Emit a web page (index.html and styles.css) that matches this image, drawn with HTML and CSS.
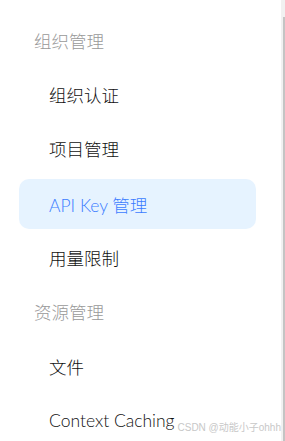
FILE: index.html
```html
<!DOCTYPE html>
<html lang="zh-CN">
<head>
    <meta charset="UTF-8">
    <meta name="viewport" content="width=device-width, initial-scale=1.0">
    <title>菜单</title>
    <link rel="stylesheet" href="styles.css">
</head>
<body>
    <div class="sidebar">
        <ul class="menu">
            <li class="group-title">组织管理</li>
            <li class="item">组织认证</li>
            <li class="item">项目管理</li>
            <li class="item active">API Key 管理</li>
            <li class="item">用量限制</li>
            <li class="group-title">资源管理</li>
            <li class="item">文件</li>
            <li class="item">Context Caching</li>
        </ul>
    </div>
    <div class="scrollbar"><div class="thumb"></div></div>
    <div class="watermark">CSDN @动能小子ohhh</div>
</body>
</html>
```

FILE: styles.css
```css
html, body {
    margin: 0;
    height: 100%;
    overflow: hidden;
}
body {
    font-family: Lato, "Noto Sans CJK SC", sans-serif;
    background-color: #fff;
    display: flex;
}
.sidebar {
    flex: 1;
    padding: 15px 0 0 19px;
}
.menu {
    list-style: none;
    margin: 0;
    padding: 0;
    width: 237px;
    display: flex;
    flex-direction: column;
    gap: 4.4px;
}
.menu li {
    height: 50px;
    display: flex;
    align-items: center;
    font-size: 17.5px;
    font-weight: 300;
    white-space: nowrap;
}
.group-title {
    padding-left: 15px;
    color: #999;
}
.item {
    padding-left: 30px;
    color: #111;
    border-radius: 10px;
}
.item.active {
    background-color: #e6f3ff;
    color: #3b7cff;
    margin-top: 1px;
    margin-bottom: -1px;
}
.scrollbar {
    width: 4px;
    background-color: #f1f1f1;
    padding: 17px 0 0 2px;
    box-sizing: border-box;
}
.thumb {
    height: 100%;
    width: 2px;
    background-color: #c4c4c4;
}
.watermark {
    position: absolute;
    right: 4px;
    bottom: 7px;
    font-family: "Liberation Sans", "Noto Sans CJK SC", sans-serif;
    font-size: 10px;
    color: #c8c8c8;
}
```
